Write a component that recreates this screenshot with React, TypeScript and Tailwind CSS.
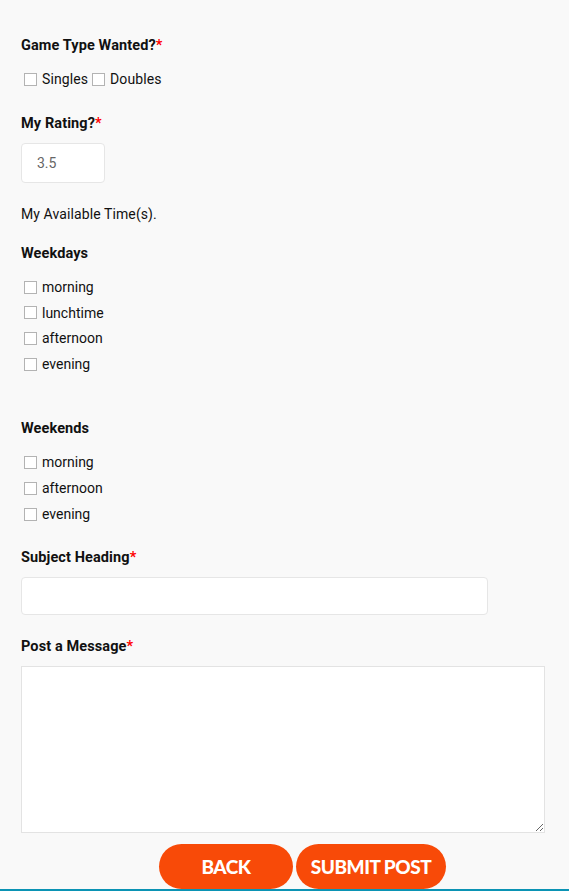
const WEEKDAYS = ['morning', 'lunchtime', 'afternoon', 'evening']
const WEEKENDS = ['morning', 'afternoon', 'evening']

function Box() {
  return <span className="inline-block w-[13px] h-[13px] border border-[#b3b3b3] bg-white shrink-0" />
}

function Label({ text, required }: { text: string; required?: boolean }) {
  return (
    <p className="font-bold text-[14.5px] leading-[20px] text-[#111] tracking-[0.1px]">
      {text}
      {required && <span className="text-[#ff0000]">*</span>}
    </p>
  )
}

function CheckRow({ text }: { text: string }) {
  return (
    <label className="flex items-center h-[20px]">
      <span className="ml-[3px] mr-[5px] flex"><Box /></span>
      <span>{text}</span>
    </label>
  )
}

export default function App() {
  return (
    <div
      className="min-h-[891px] w-full bg-[#f9f9f9] text-[14px] leading-[20px] text-[#111] flex flex-col"
      style={{ fontFamily: 'Roboto, "Liberation Sans", sans-serif' }}
    >
      <div className="px-[21px] pt-[36px] flex-1">
        <Label text="Game Type Wanted?" required />
        <div className="mt-[13px] flex items-center h-[20px] tracking-[0.1px]">
          <CheckRow text="Singles" />
          <span className="w-[1px]" />
          <CheckRow text="Doubles" />
        </div>

        <div className="mt-[25px]"><Label text="My Rating?" required /></div>
        <div className="mt-[9px] w-[84px] h-[40px] bg-white border border-[#e6e6e6] rounded-[4px] flex items-center pl-[15px] text-[#666]">
          3.5
        </div>

        <p className="mt-[21px] tracking-[0.1px]">My Available Time(s).</p>

        <div className="mt-[20px]"><Label text="Weekdays" /></div>
        <div className="mt-[13px] flex flex-col gap-[5.7px]">
          {WEEKDAYS.map(d => <CheckRow key={d} text={d} />)}
        </div>

        <div className="mt-[45px]"><Label text="Weekends" /></div>
        <div className="mt-[13px] flex flex-col gap-[6px]">
          {WEEKENDS.map(d => <CheckRow key={d} text={d} />)}
        </div>

        <div className="mt-[24px]"><Label text="Subject Heading" required /></div>
        <input
          className="mt-[9px] block w-[467px] h-[38px] bg-white border border-[#e6e6e6] rounded-[4px] outline-none px-3"
        />

        <div className="mt-[22px]"><Label text="Post a Message" required /></div>
        <textarea
          className="mt-[9px] block w-[524px] h-[167px] bg-white border border-[#e3e3e3] outline-none p-2"
        />

        <div className="mt-[11px] flex gap-[3px] pl-[138px]">
          <button
            className="w-[134px] h-[45px] rounded-full bg-[#f84a08] text-white text-[19px] font-black tracking-[-0.5px] uppercase"
            style={{ fontFamily: 'Lato, "Open Sans", sans-serif' }}
          >
            Back
          </button>
          <button
            className="w-[150px] h-[45px] rounded-full bg-[#f84a08] text-white text-[19px] font-black tracking-[-0.5px] uppercase"
            style={{ fontFamily: 'Lato, "Open Sans", sans-serif' }}
          >
            Submit Post
          </button>
        </div>
      </div>
      <div className="h-[2px] bg-[#0b93b4]" />
    </div>
  )
}
